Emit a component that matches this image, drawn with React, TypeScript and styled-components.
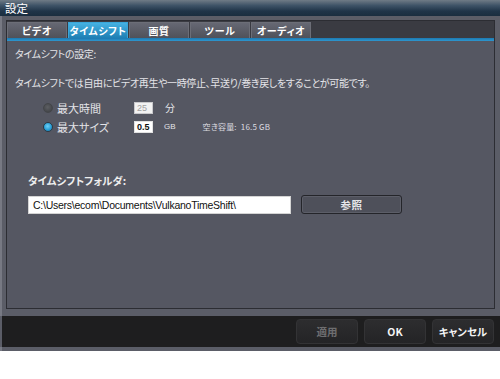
import React from "react";
import styled, { createGlobalStyle } from "styled-components";

const Global = createGlobalStyle`
  html, body { margin: 0; padding: 0; background: #ffffff; }
  body {
    font-family: "Noto Sans CJK JP", "Noto Sans", sans-serif;
    font-feature-settings: "palt";
  }
`;

const Window = styled.div`
  width: 500px;
  height: 351px;
  display: flex;
  flex-direction: column;
  background: #5b5d67;
  box-sizing: border-box;
  border-left: 2px solid #777983;
`;

const TitleBar = styled.div`
  height: 16px;
  margin-left: -2px;
  display: flex;
  align-items: center;
  padding-left: 5px;
  background: linear-gradient(#6f7b86 0%, #3d5266 35%, #1f3448 70%, #1a2d3f 100%);
  color: #ffffff;
  font-size: 11.5px;
  line-height: 16px;
`;

const Body = styled.div`
  padding: 4px 5px 0 4px;
  display: flex;
  flex-direction: column;
`;

const Panel = styled.div`
  border: 1px solid #2c2d33;
  background: #3a3b42;
  height: 287px;
  display: flex;
  flex-direction: column;
`;

const TabRow = styled.div`
  display: flex;
  padding-top: 1px;
  height: 16px;
`;

const Tab = styled.div<{ $active?: boolean }>`
  width: 60px;
  height: 16px;
  margin-right: 1px;
  display: flex;
  align-items: center;
  justify-content: center;
  box-sizing: border-box;
  border: 1px solid ${(p) => (p.$active ? "#3aa6d8" : "#6c6e77")};
  border-bottom: none;
  background: ${(p) =>
    p.$active
      ? "linear-gradient(#45b2e2, #1f7fb4)"
      : "linear-gradient(#666873, #4f515a)"};
  color: #ffffff;
  font-size: 10px;
  font-weight: 700;
  letter-spacing: 0.6px;
`;

const BlueLine = styled.div`
  height: 3px;
  background: linear-gradient(#1c78b0, #2e97cf);
`;

const Content = styled.div`
  flex: 1;
  background: #555762;
  padding: 6px 8px 0 8px;
  color: #e4e4e8;
  font-size: 10px;
  letter-spacing: -0.35px;
  display: flex;
  flex-direction: column;
`;

const Line = styled.div<{ $top: number }>`
  margin-top: ${(p) => p.$top}px;
  line-height: 13px;
  white-space: nowrap;
`;

const OptionRow = styled.div<{ $top: number }>`
  margin-top: ${(p) => p.$top}px;
  margin-left: 28px;
  display: flex;
  align-items: center;
  height: 13px;
`;

const Radio = styled.div<{ $on?: boolean }>`
  width: 10px;
  height: 10px;
  border-radius: 50%;
  box-sizing: border-box;
  background: ${(p) =>
    p.$on
      ? "radial-gradient(circle at 45% 40%, #6fd0f5 0%, #2a9fd6 55%, #1b6f9c 100%)"
      : "radial-gradient(circle at 45% 40%, #5d5f63 0%, #45474b 70%, #3a3b3f 100%)"};
  border: 1px solid ${(p) => (p.$on ? "#2b3a46" : "#44464a")};
`;

const OptLabel = styled.span`
  margin-left: 4px;
  width: 77px;
  font-size: 11px;
  letter-spacing: 0;
`;

const SmallInput = styled.div<{ $disabled?: boolean }>`
  width: 19px;
  height: 12px;
  box-sizing: border-box;
  background: ${(p) => (p.$disabled ? "#f2f2f2" : "#ffffff")};
  border: 1px solid ${(p) => (p.$disabled ? "#c9c9cc" : "#e2e2e2")};
  color: ${(p) => (p.$disabled ? "#a0a0a0" : "#111111")};
  font-family: "Liberation Sans", sans-serif;
  font-size: 9px;
  letter-spacing: 0;
  font-weight: ${(p) => (p.$disabled ? 400 : 700)};
  line-height: 10px;
  padding-left: 2px;
`;

const Unit = styled.span<{ $latin?: boolean }>`
  margin-left: ${(p) => (p.$latin ? 11 : 12)}px;
  font-size: ${(p) => (p.$latin ? "8px" : "10px")};
  letter-spacing: 0;
  font-family: ${(p) =>
    p.$latin ? '"Liberation Sans", sans-serif' : "inherit"};
`;

const Free = styled.span`
  margin-left: 27px;
  font-size: 8px;
  color: #dcdce0;
  letter-spacing: 0.2px;
`;

const FolderTitle = styled.div`
  margin-top: 41px;
  margin-left: 13px;
  font-size: 10.5px;
  font-weight: 700;
  line-height: 13px;
  color: #eeeeee;
  letter-spacing: 0;
`;

const FolderRow = styled.div`
  margin-top: 8px;
  margin-left: 13px;
  display: flex;
  align-items: center;
`;

const PathInput = styled.div`
  width: 263px;
  height: 18px;
  box-sizing: border-box;
  background: #ffffff;
  border: 1px solid #d4d4d4;
  color: #111111;
  font-family: "Liberation Sans", sans-serif;
  font-size: 10.5px;
  letter-spacing: -0.25px;
  line-height: 16px;
  padding-left: 4px;
`;

const BrowseButton = styled.div`
  margin-left: 10px;
  width: 101px;
  height: 19px;
  box-sizing: border-box;
  border: 1px solid #24252a;
  border-radius: 3px;
  background: #4e505a;
  box-shadow: inset 0 0 0 1px #5c5e68;
  color: #e6e6ea;
  font-size: 10.5px;
  font-weight: 700;
  letter-spacing: 0.5px;
  display: flex;
  align-items: center;
  justify-content: center;
`;

const Footer = styled.div`
  margin-top: 7px;
  height: 31px;
  background: #1e1e1f;
  display: flex;
  align-items: center;
  justify-content: flex-end;
  padding-right: 6px;
  gap: 6px;
  margin-left: -2px;
  padding-left: 2px;
  box-shadow: inset 2px 0 0 #5b5d67;
`;

const FooterButton = styled.div<{ $disabled?: boolean }>`
  width: 62px;
  height: 25px;
  box-sizing: border-box;
  border: 1px solid #333335;
  border-radius: 4px;
  background: linear-gradient(#2d2d2f, #242426);
  color: ${(p) => (p.$disabled ? "#6e6e70" : "#f4f4f4")};
  font-size: 10.5px;
  font-weight: 700;
  display: flex;
  align-items: center;
  justify-content: center;
`;

const BottomBand = styled.div`
  flex: 1;
`;

export default function App() {
  return (
    <>
      <Global />
      <Window>
        <TitleBar>設定</TitleBar>
        <Body>
          <Panel>
            <TabRow>
              <Tab>ビデオ</Tab>
              <Tab $active>タイムシフト</Tab>
              <Tab>画質</Tab>
              <Tab>ツール</Tab>
              <Tab>オーディオ</Tab>
            </TabRow>
            <BlueLine />
            <Content>
              <Line $top={0}>タイムシフトの設定:</Line>
              <Line $top={16}>
                タイムシフトでは自由にビデオ再生や一時停止、早送り/巻き戻しをすることが可能です。
              </Line>
              <OptionRow $top={12}>
                <Radio />
                <OptLabel>最大時間</OptLabel>
                <SmallInput $disabled>25</SmallInput>
                <Unit>分</Unit>
              </OptionRow>
              <OptionRow $top={6}>
                <Radio $on />
                <OptLabel>最大サイズ</OptLabel>
                <SmallInput>0.5</SmallInput>
                <Unit $latin>GB</Unit>
                <Free>空き容量:&nbsp;&nbsp;16.5 GB</Free>
              </OptionRow>
              <FolderTitle>タイムシフトフォルダ:</FolderTitle>
              <FolderRow>
                <PathInput>C:\Users\ecom\Documents\VulkanoTimeShift\</PathInput>
                <BrowseButton>参照</BrowseButton>
              </FolderRow>
            </Content>
          </Panel>
        </Body>
        <Footer>
          <FooterButton $disabled>適用</FooterButton>
          <FooterButton>OK</FooterButton>
          <FooterButton>キャンセル</FooterButton>
        </Footer>
        <BottomBand />
      </Window>
    </>
  );
}
